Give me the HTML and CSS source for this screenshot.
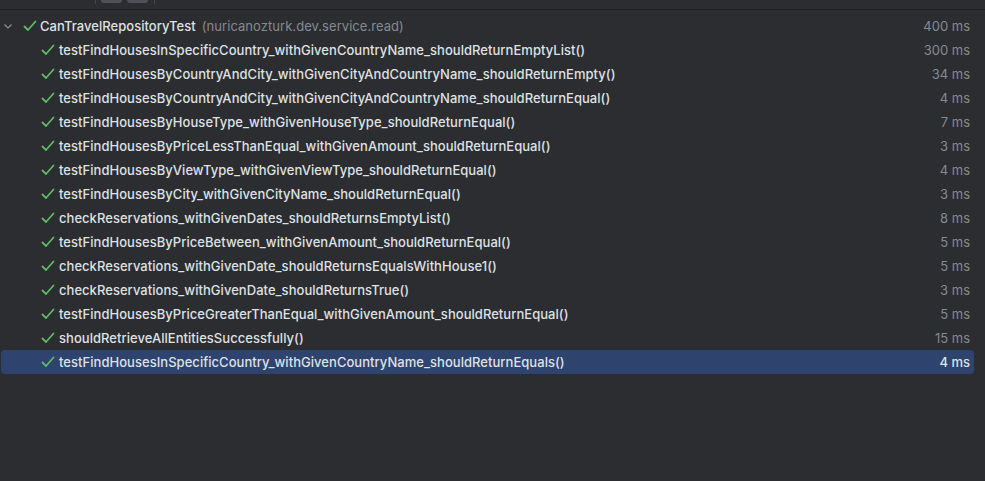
FILE: index.html
```html
<!DOCTYPE html>
<html>
<head>
<meta charset="utf-8">
<link rel="stylesheet" href="styles.css">
</head>
<body>
<div class="toolbar">
  <span class="sep s1"></span>
  <span class="tbtn"></span>
  <span class="tbtn"></span>
  <span class="sep s2"></span>
</div>
<div class="tree">
  <div class="row root">
    <svg class="chev" width="10" height="10" viewBox="0 0 10 10"><path d="M1.5 3.5 L5 7 L8.5 3.5" fill="none" stroke="#8c8f94" stroke-width="1.2"/></svg>
    <svg class="check" width="14" height="14" viewBox="0 0 14 14"><path d="M1.5 7.5 L5 11 L12.5 2.5" fill="none" stroke="#5fb865" stroke-width="1.8" stroke-linecap="round" stroke-linejoin="round"/></svg>
    <span class="name">CanTravelRepositoryTest</span><span class="pkg">(nuricanozturk.dev.service.read)</span>
    <span class="time">400 ms</span>
  </div>
  <div class="row child"><svg class="check" width="14" height="14" viewBox="0 0 14 14"><path d="M1.5 7.5 L5 11 L12.5 2.5" fill="none" stroke="#5fb865" stroke-width="1.8" stroke-linecap="round" stroke-linejoin="round"/></svg><span class="name">testFindHousesInSpecificCountry_withGivenCountryName_shouldReturnEmptyList()</span><span class="time">300 ms</span></div>
  <div class="row child"><svg class="check" width="14" height="14" viewBox="0 0 14 14"><path d="M1.5 7.5 L5 11 L12.5 2.5" fill="none" stroke="#5fb865" stroke-width="1.8" stroke-linecap="round" stroke-linejoin="round"/></svg><span class="name">testFindHousesByCountryAndCity_withGivenCityAndCountryName_shouldReturnEmpty()</span><span class="time">34 ms</span></div>
  <div class="row child"><svg class="check" width="14" height="14" viewBox="0 0 14 14"><path d="M1.5 7.5 L5 11 L12.5 2.5" fill="none" stroke="#5fb865" stroke-width="1.8" stroke-linecap="round" stroke-linejoin="round"/></svg><span class="name">testFindHousesByCountryAndCity_withGivenCityAndCountryName_shouldReturnEqual()</span><span class="time">4 ms</span></div>
  <div class="row child"><svg class="check" width="14" height="14" viewBox="0 0 14 14"><path d="M1.5 7.5 L5 11 L12.5 2.5" fill="none" stroke="#5fb865" stroke-width="1.8" stroke-linecap="round" stroke-linejoin="round"/></svg><span class="name">testFindHousesByHouseType_withGivenHouseType_shouldReturnEqual()</span><span class="time">7 ms</span></div>
  <div class="row child"><svg class="check" width="14" height="14" viewBox="0 0 14 14"><path d="M1.5 7.5 L5 11 L12.5 2.5" fill="none" stroke="#5fb865" stroke-width="1.8" stroke-linecap="round" stroke-linejoin="round"/></svg><span class="name">testFindHousesByPriceLessThanEqual_withGivenAmount_shouldReturnEqual()</span><span class="time">3 ms</span></div>
  <div class="row child"><svg class="check" width="14" height="14" viewBox="0 0 14 14"><path d="M1.5 7.5 L5 11 L12.5 2.5" fill="none" stroke="#5fb865" stroke-width="1.8" stroke-linecap="round" stroke-linejoin="round"/></svg><span class="name">testFindHousesByViewType_withGivenViewType_shouldReturnEqual()</span><span class="time">4 ms</span></div>
  <div class="row child"><svg class="check" width="14" height="14" viewBox="0 0 14 14"><path d="M1.5 7.5 L5 11 L12.5 2.5" fill="none" stroke="#5fb865" stroke-width="1.8" stroke-linecap="round" stroke-linejoin="round"/></svg><span class="name">testFindHousesByCity_withGivenCityName_shouldReturnEqual()</span><span class="time">3 ms</span></div>
  <div class="row child"><svg class="check" width="14" height="14" viewBox="0 0 14 14"><path d="M1.5 7.5 L5 11 L12.5 2.5" fill="none" stroke="#5fb865" stroke-width="1.8" stroke-linecap="round" stroke-linejoin="round"/></svg><span class="name">checkReservations_withGivenDates_shouldReturnsEmptyList()</span><span class="time">8 ms</span></div>
  <div class="row child"><svg class="check" width="14" height="14" viewBox="0 0 14 14"><path d="M1.5 7.5 L5 11 L12.5 2.5" fill="none" stroke="#5fb865" stroke-width="1.8" stroke-linecap="round" stroke-linejoin="round"/></svg><span class="name">testFindHousesByPriceBetween_withGivenAmount_shouldReturnEqual()</span><span class="time">5 ms</span></div>
  <div class="row child"><svg class="check" width="14" height="14" viewBox="0 0 14 14"><path d="M1.5 7.5 L5 11 L12.5 2.5" fill="none" stroke="#5fb865" stroke-width="1.8" stroke-linecap="round" stroke-linejoin="round"/></svg><span class="name">checkReservations_withGivenDate_shouldReturnsEqualsWithHouse1()</span><span class="time">5 ms</span></div>
  <div class="row child"><svg class="check" width="14" height="14" viewBox="0 0 14 14"><path d="M1.5 7.5 L5 11 L12.5 2.5" fill="none" stroke="#5fb865" stroke-width="1.8" stroke-linecap="round" stroke-linejoin="round"/></svg><span class="name">checkReservations_withGivenDate_shouldReturnsTrue()</span><span class="time">3 ms</span></div>
  <div class="row child"><svg class="check" width="14" height="14" viewBox="0 0 14 14"><path d="M1.5 7.5 L5 11 L12.5 2.5" fill="none" stroke="#5fb865" stroke-width="1.8" stroke-linecap="round" stroke-linejoin="round"/></svg><span class="name">testFindHousesByPriceGreaterThanEqual_withGivenAmount_shouldReturnEqual()</span><span class="time">5 ms</span></div>
  <div class="row child"><svg class="check" width="14" height="14" viewBox="0 0 14 14"><path d="M1.5 7.5 L5 11 L12.5 2.5" fill="none" stroke="#5fb865" stroke-width="1.8" stroke-linecap="round" stroke-linejoin="round"/></svg><span class="name">shouldRetrieveAllEntitiesSuccessfully()</span><span class="time">15 ms</span></div>
  <div class="row child selected"><svg class="check" width="14" height="14" viewBox="0 0 14 14"><path d="M1.5 7.5 L5 11 L12.5 2.5" fill="none" stroke="#5fb865" stroke-width="1.8" stroke-linecap="round" stroke-linejoin="round"/></svg><span class="name">testFindHousesInSpecificCountry_withGivenCountryName_shouldReturnEquals()</span><span class="time">4 ms</span></div>
</div>
</body>
</html>
```

FILE: styles.css
```css
html, body {
  margin: 0;
  padding: 0;
  background: #2b2d30;
  height: 100%;
}
body {
  font-family: Inter, "Noto Sans", sans-serif;
  font-size: 13px;
  color: #dfe1e5;
  overflow: hidden;
}
.toolbar {
  height: 9px;
  border-bottom: 1px solid #1e1f22;
  display: flex;
  align-items: flex-start;
  overflow: hidden;
}
.sep {
  width: 1px;
  height: 4px;
  background: #43454a;
}
.s1 { margin-left: 95px; }
.tbtn {
  width: 21px;
  height: 4px;
  margin-top: -1px;
  margin-left: 5px;
  background: #4e5157;
  border-radius: 0 0 3px 3px;
}
.s2 { margin-left: 6px; }
.tree {
  padding-top: 4px;
  padding-right: 11px;
}
.row {
  height: 24px;
  display: flex;
  align-items: center;
  border-radius: 4px;
  white-space: nowrap;
}
.name {
  font-weight: 500;
  letter-spacing: 0.04px;
}
.root { padding-left: 3px; }
.chev { margin-right: 10px; }
.check { flex: none; }
.root .check { margin-right: 3px; }
.child { padding-left: 41px; }
.child .check { margin-right: 4px; }
.pkg {
  color: #868a91;
  margin-left: 6px;
  letter-spacing: 0.05px;
}
.time {
  margin-left: auto;
  color: #868a91;
  padding-right: 4px;
}
.selected {
  background: #2e436e;
  margin-left: 1px;
}
.selected.child { padding-left: 40px; }
.selected .time { color: #dfe1e5; font-weight: 500; }
```
